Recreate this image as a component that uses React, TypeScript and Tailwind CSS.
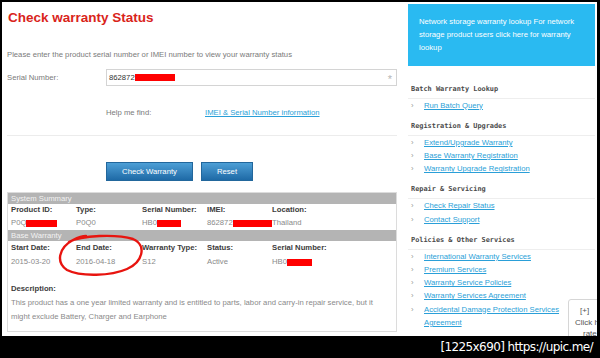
import { Fragment } from 'react';

const sidebarSections = [
  { title: 'Batch Warranty Lookup', links: ['Run Batch Query'] },
  {
    title: 'Registration & Upgrades',
    links: ['Extend/Upgrade Warranty', 'Base Warranty Registration', 'Warranty Upgrade Registration'],
  },
  { title: 'Repair & Servicing', links: ['Check Repair Status', 'Contact Support'] },
  {
    title: 'Policies & Other Services',
    links: [
      'International Warranty Services',
      'Premium Services',
      'Warranty Service Policies',
      'Warranty Services Agreement',
      'Accidental Damage Protection Services Agreement',
    ],
  },
];

// redacted bit of a value
function Redact({ w, h = 7 }: { w: number; h?: number }) {
  return <span className="inline-block bg-[#ff0000] align-middle" style={{ width: w, height: h }} />;
}

function Cell({ label, children }: { label?: boolean; children: React.ReactNode }) {
  return (
    <div className={`flex items-center whitespace-nowrap ${label ? 'font-bold text-[#3c3c3c]' : 'text-[#8a8a8a]'}`}>
      {children}
    </div>
  );
}

const grid = 'grid grid-cols-[65px_66px_65px_65px_1fr] px-[3px]';

export default function App() {
  return (
    <div className="w-[600px] h-[358px] bg-black overflow-hidden font-['Liberation_Sans',Arial,sans-serif] text-[7.7px]">
      <div className="pt-[2px] pl-[2px]">
        <div className="relative w-[595px] h-[334px] bg-white flex overflow-hidden">
          {/* main column */}
          <div className="w-[400px] pl-[5px] pr-[5px]">
            <h1 className="mt-[8px] h-[16px] leading-[16px] text-[13.5px] font-bold text-[#d9241b] pl-[1px]">
              Check warranty Status
            </h1>
            <p className="mt-[23px] leading-[12px] text-[#7a7a7a]">
              Please enter the product serial number or IMEI number to view your warranty status
            </p>

            <div className="mt-[8px] flex items-center h-[17px]">
              <span className="w-[99px] text-[#7a7a7a]">Serial Number:</span>
              <div className="flex-1 h-[17px] border border-[#d4d4d4] flex items-center pl-[2px] pr-[4px] text-[#333]">
                <span>862872</span>
                <Redact w={40} />
                <span className="ml-auto text-[11px] leading-none text-[#b5b5b5] pt-[3px]">*</span>
              </div>
            </div>

            <div className="mt-[21px] flex leading-[12px]">
              <span className="w-[99px] pl-[99px] box-content text-[#7a7a7a]">Help me find:</span>
              <a className="text-[#2a9fd8] underline">IMEI &amp; Serial Number information</a>
            </div>

            <div className="mt-[16px] h-px bg-[#ececec]" />

            <div className="mt-[26px] flex gap-[8px] pl-[99px]">
              <button className="w-[87px] h-[19px] bg-gradient-to-b from-[#4d9fd6] to-[#1e6aa6] border border-[#22679c] text-white text-[7.7px]">
                Check Warranty
              </button>
              <button className="w-[52px] h-[19px] bg-gradient-to-b from-[#4d9fd6] to-[#1e6aa6] border border-[#22679c] text-white text-[7.7px]">
                Reset
              </button>
            </div>

            {/* results */}
            <div className="mt-[11px] border border-[#dcdcdc] h-[140px]">
              <div className="h-[11px] bg-[#b4b4b4] text-[#f2f2f2] leading-[11px] px-[3px]">System Summary</div>
              <div className={`${grid} h-[12px]`}>
                <Cell label>Product ID:</Cell>
                <Cell label>Type:</Cell>
                <Cell label>Serial Number:</Cell>
                <Cell label>IMEI:</Cell>
                <Cell label>Location:</Cell>
              </div>
              <div className={`${grid} h-[14px]`}>
                <Cell>
                  P0Q<Redact w={31} />
                </Cell>
                <Cell>P0Q0</Cell>
                <Cell>
                  HB0<Redact w={24} />
                </Cell>
                <Cell>
                  862872<Redact w={40} />
                </Cell>
                <Cell>Thailand</Cell>
              </div>
              <div className="h-[11px] bg-[#b4b4b4] text-[#f2f2f2] leading-[11px] px-[3px]">Base Warranty</div>
              <div className={`${grid} h-[14px]`}>
                <Cell label>Start Date:</Cell>
                <Cell label>End Date:</Cell>
                <Cell label>Warranty Type:</Cell>
                <Cell label>Status:</Cell>
                <Cell label>Serial Number:</Cell>
              </div>
              <div className={`${grid} h-[14px]`}>
                <Cell>2015-03-20</Cell>
                <Cell>2016-04-18</Cell>
                <Cell>S12</Cell>
                <Cell>Active</Cell>
                <Cell>
                  HB0<Redact w={25} />
                </Cell>
              </div>
              <div className="mt-[13px] px-[3px] h-[14px] leading-[14px] font-bold text-[#3c3c3c]">Description:</div>
              <p className="px-[3px] w-[378px] leading-[13.5px] text-[#8a8a8a]">
                This product has a one year limited warranty and is entitled to parts, labor and carry-in repair service, but it
                might exclude Battery, Charger and Earphone
              </p>
            </div>
          </div>

          {/* sidebar */}
          <div className="w-[187px] ml-[6px]">
            <div className="mt-[2px] h-[62px] bg-[#2abaf1] text-white px-[11px] pt-[11px] leading-[13px]">
              Network storage warranty lookup For network storage product users click here for warranty lookup
            </div>
            <div className="mt-[16.5px]">
              {sidebarSections.map((s, i) => (
                <div key={s.title} className={i > 0 ? 'mt-[8px]' : ''}>
                  <div className="pl-[3px] pb-[2px] border-b border-[#eeeeee] h-[16px] leading-[13px] font-['DejaVu_Sans_Mono',monospace] font-bold text-[6.9px] text-[#4a4a4a]">
                    {s.title}
                  </div>
                  {s.links.map((l) => (
                    <Fragment key={l}>
                      <div className="flex leading-[13.2px]">
                        <span className="w-[16px] pl-[3px] text-[#9a9a9a]">›</span>
                        <a className="w-[155px] text-[#2a9fd8] underline">{l}</a>
                      </div>
                    </Fragment>
                  ))}
                </div>
              ))}
            </div>
          </div>

          {/* hand-drawn circle around End Date */}
          <svg className="absolute left-[53px] top-[231px]" width="92" height="46" viewBox="0 0 92 46">
            <path
              d="M14 9 C26 2 62 1 78 6 C92 12 88 29 72 36 C56 43 26 44 12 37 C1 30 3 15 18 7 C22 5 27 3 31 3"
              fill="none"
              stroke="#e8140f"
              strokeWidth="2.4"
              strokeLinecap="round"
            />
          </svg>

          {/* feedback tab, partly off the right edge */}
          <div className="absolute left-[566px] top-[297px] w-[60px] h-[50px] border border-[#d6d6d6] rounded-tl-[3px] bg-white text-[#555] text-[8px] leading-[11.5px] pt-[5px] whitespace-nowrap">
            <div className="pl-[11px]">[+]</div>
            <div className="pl-[6px]">Click here</div>
            <div className="pl-[14px]">rate this</div>
          </div>
        </div>
      </div>

      <div className="flex justify-end pr-[7px] h-[22px] items-center text-white text-[12px] font-['DejaVu_Sans',sans-serif] tracking-[-0.6px]">
        [1225x690] https://upic.me/
      </div>
    </div>
  );
}
